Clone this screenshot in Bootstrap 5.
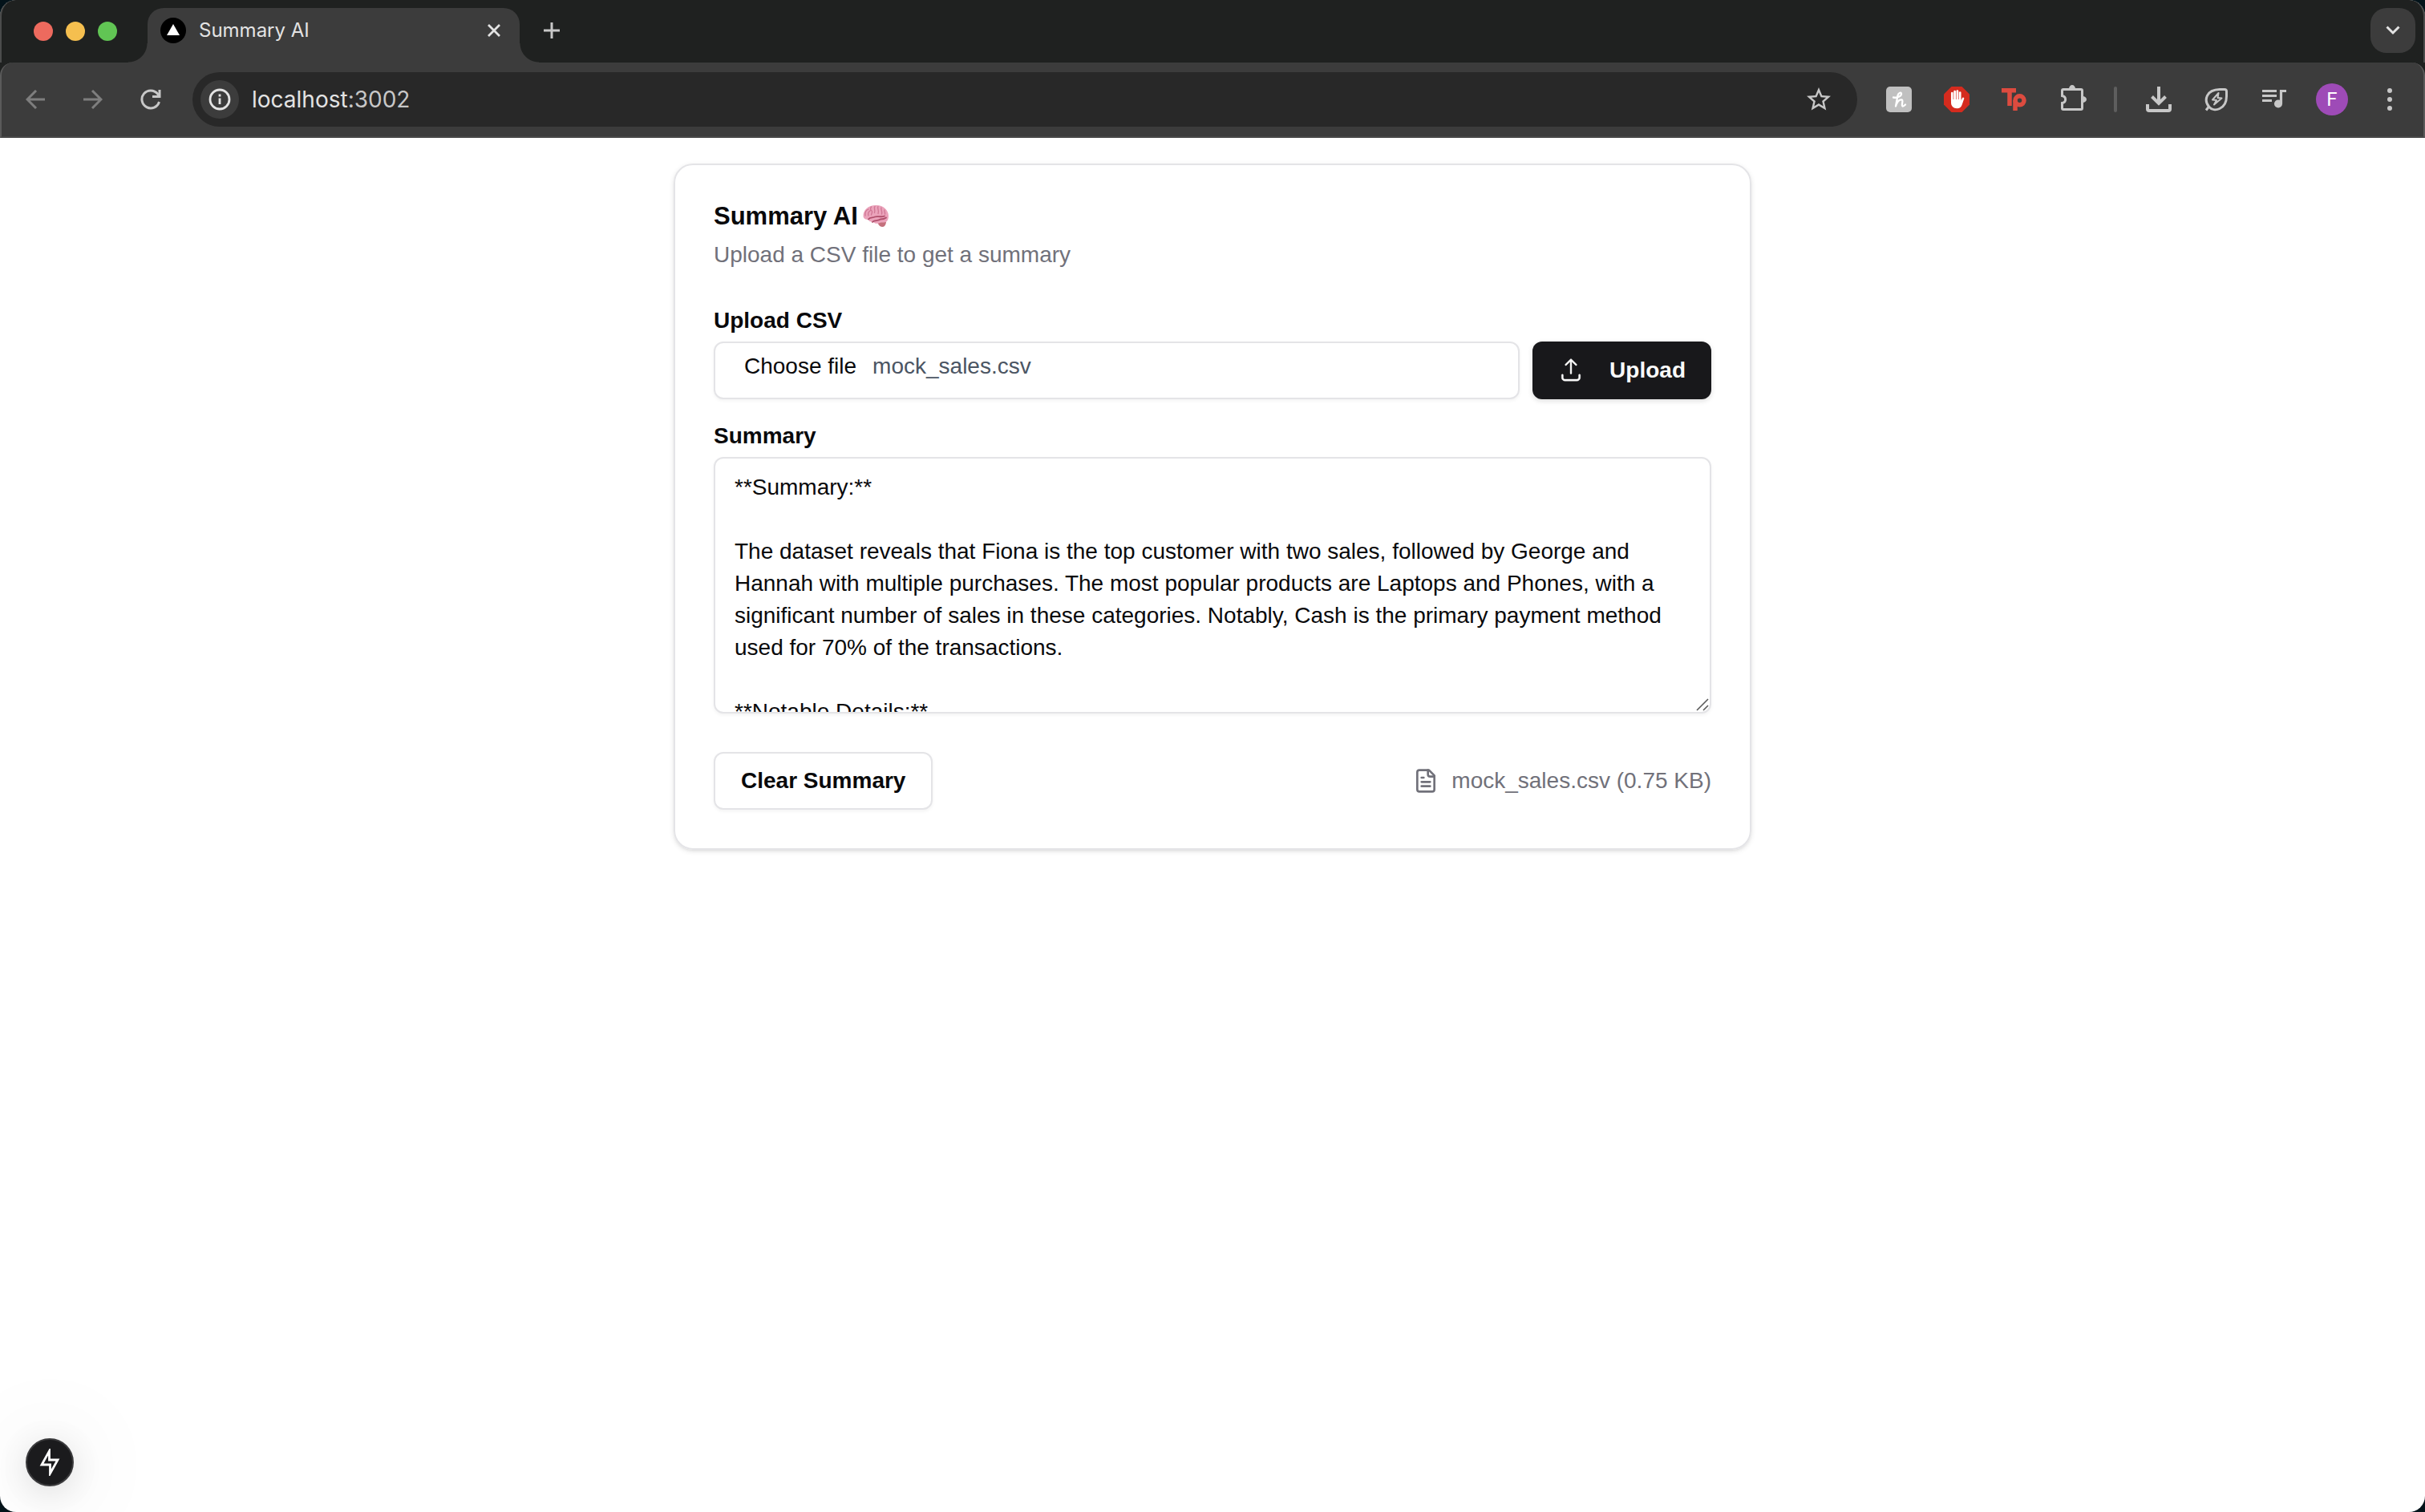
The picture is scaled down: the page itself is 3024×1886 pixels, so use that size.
<!DOCTYPE html>
<html lang="en">
<head>
<meta charset="utf-8">
<meta name="viewport" content="width=device-width, initial-scale=1">
<title>Summary AI</title>
<link rel="stylesheet" href="https://cdn.jsdelivr.net/npm/bootstrap@5.3.0/dist/css/bootstrap.min.css">
<style>
  html { background: #03131a; }
  body { min-height: 100vh; font-family: "Liberation Sans", Arial, sans-serif; font-size: 28px; line-height: 40px; color: #09090b; background: #03131a; }
  svg { display: block; flex: none; }
  .window-frame { min-height: 100vh; border-radius: 20px; background: #fff; overflow: hidden; position: relative; }

  .tab-strip { background: #1f2120; height: 78px; padding: 10px 10px 0 40px; border: 2px solid #4b4c4c; border-width: 0 2px; border-radius: 20px 20px 0 0; }
  .lights { gap: 16px; width: 142px; height: 58px; }
  .light { width: 24px; height: 24px; border-radius: 50%; }
  .light-close { background: #ed6a5e; }
  .light-min { background: #f5bf4f; }
  .light-max { background: #61c554; }
  .browser-tab { position: relative; width: 464px; height: 68px; padding: 0 20px 12px 16px; border-radius: 20px 20px 0 0; background: #3c3c3c; font: 24px/32px Inter, sans-serif; color: #e3e3e3; }
  .browser-tab::before, .browser-tab::after { content: ""; position: absolute; bottom: 0; width: 24px; height: 24px; }
  .browser-tab::before { right: 100%; background: radial-gradient(circle at 0 0, transparent 23px, #3c3c3c 24px); }
  .browser-tab::after { left: 100%; background: radial-gradient(circle at 100% 0, transparent 23px, #3c3c3c 24px); }
  .icon-btn { display: flex; align-items: center; justify-content: center; flex: none; width: 48px; height: 48px; padding: 0; border: 0; background: none; color: #c7c7c7; border-radius: 50%; }
  .tab-close { width: 24px; height: 32px; color: #e3e3e3; }
  .tab-new { margin: 4px 0 0 16px; }
  .tab-search { width: 56px; height: 56px; border-radius: 20px; background: #3c3c3c; color: #e3e3e3; }

  .toolbar-back { background: #1f2120; }
  .toolbar-row { height: 94px; padding: 0 18px; background: #3c3c3c; border: 2px solid #5a5a5a; border-top: 0; border-bottom-color: #484848; border-radius: 16px 16px 0 0; }
  .nav-group { gap: 24px; }
  .omnibox { height: 68px; margin: 0 28px; padding: 0 24px 0 10px; border-radius: 34px; background: #282828; }
  .site-info { background: #3c3c3c; color: #e3e3e3; }
  .address { font: 28px/40px Inter, sans-serif; color: #e3e3e3; }
  .address-port { color: #c7c7c7; }
  .ext-sep { width: 4px; height: 32px; margin: 0 4px; border-radius: 2px; background: #5e5e5e; }
  .avatar { width: 40px; height: 40px; border-radius: 50%; background: #9e4bb7; color: #fff; font: 24px/40px Roboto, sans-serif; }

  .summary-card { max-width: 1344px; margin: 32px auto; padding: 48px; border: 2px solid #e4e4e7; border-radius: 24px; box-shadow: 0 2px 6px rgba(0,0,0,.1), 0 2px 4px -2px rgba(0,0,0,.1); }
  .stack-12 { gap: 12px; }
  .card-heading { font-size: 31px; line-height: 32px; font-weight: 700; gap: 6px; }
  .muted-text { color: #71717a; }
  .field-label { font-weight: 700; line-height: 28px; }
  .field-box { border: 2px solid #e4e4e7; border-radius: 12px; background: #fff; box-shadow: 0 2px 4px rgba(0,0,0,.05); color: #09090b; }
  .file-field { height: 72px; padding: 8px 36px; line-height: 42px; gap: 20px; cursor: pointer; }
  .file-name { color: #4b5563; }
  .app-btn { height: 72px; padding: 0 32px; border-radius: 12px; font-size: 28px; line-height: 40px; font-weight: 700; }
  .app-btn-dark { gap: 32px; background: #18181b; color: #fafafa; border: 0; box-shadow: 0 2px 6px rgba(0,0,0,.14); }
  .summary-text { display: block; width: 100%; height: 320px; padding: 16px 24px; font: inherit; resize: none; overflow: hidden; }
  .grip { position: absolute; right: 3px; bottom: 3px; }
  .dev-button { position: absolute; left: 32px; bottom: 32px; width: 60px; height: 60px; border: 2px solid #3b3b3d; border-radius: 50%; background: #1b1b1d; color: #fff; box-shadow: 0 8px 40px rgba(0,0,0,.12), 0 4px 120px rgba(0,0,0,.14); }
</style>
</head>
<body>
<div class="window-frame">
  <header>
    <div class="toolbar-back">
      <div class="tab-strip d-flex align-items-start">
        <div class="lights d-flex align-items-center">
          <span class="light light-close"></span>
          <span class="light light-min"></span>
          <span class="light light-max"></span>
        </div>
        <div class="browser-tab d-flex align-items-center">
          <svg width="32" height="32" viewBox="0 0 32 32"><circle cx="16" cy="16" r="16"/><path d="M16 8l8 14H8z" fill="#fff"/></svg>
          <span class="flex-grow-1 ms-3">Summary AI</span>
          <button class="icon-btn tab-close" aria-label="Close tab"><svg width="16" height="16" viewBox="0 0 16 16" stroke="currentColor" stroke-width="2.8"><path d="M1 1l14 14M15 1L1 15"/></svg></button>
        </div>
        <button class="icon-btn tab-new" aria-label="New tab"><svg width="20" height="20" viewBox="0 0 20 20" stroke="currentColor" stroke-width="3"><path d="M10 0v20M0 10h20"/></svg></button>
        <button class="icon-btn tab-search ms-auto" aria-label="Search tabs"><svg width="18" height="12" viewBox="0 0 18 12" fill="none" stroke="currentColor" stroke-width="3"><path d="M1.500 1.500L9 9l7.500-7.500"/></svg></button>
      </div>
      <div class="toolbar-row d-flex align-items-center">
        <div class="nav-group d-flex">
          <button class="icon-btn" aria-label="Back"><svg width="24" height="24" viewBox="0 0 24 24" fill="none" stroke="#7e7e7e" stroke-width="3"><path d="M24 12H2M13 1L2 12l11 11"/></svg></button>
          <button class="icon-btn" aria-label="Forward"><svg width="24" height="24" viewBox="0 0 24 24" fill="none" stroke="#7e7e7e" stroke-width="3"><path d="M0 12h22M11 1l11 11-11 11"/></svg></button>
          <button class="icon-btn" aria-label="Reload"><svg width="26" height="26" viewBox="0 0 26 26" fill="none" stroke="currentColor" stroke-width="3"><path d="M23.500 16A11 11 0 1 1 21.500 6L24 9"/><path d="M24 1v8.500h-9"/></svg></button>
        </div>
        <div class="omnibox d-flex align-items-center flex-grow-1">
          <button class="icon-btn site-info" aria-label="Site information"><svg width="28" height="28" viewBox="0 0 28 28" fill="none" stroke="currentColor" stroke-width="2.800"><circle cx="14" cy="14" r="12"/><path d="M14 12.500V20M14 7.500v3"/></svg></button>
          <span class="address flex-grow-1 ms-3">localhost<span class="address-port">:3002</span></span>
          <button class="icon-btn" aria-label="Bookmark this tab"><svg width="36" height="36" viewBox="0 0 24 24" fill="currentColor"><path d="M22 9.240l-7.190-.620L12 2 9.190 8.630 2 9.240l5.460 4.730L5.820 21 12 17.270 18.180 21l-1.630-7.030L22 9.240zM12 15.400l-3.760 2.270 1-4.280-3.320-2.880 4.380-.380L12 6.100l1.710 4.040 4.380.380-3.320 2.880 1 4.280L12 15.400z"/></svg></button>
        </div>
        <div class="nav-group d-flex align-items-center">
          <button class="icon-btn" aria-label="Honey"><svg width="32" height="32" viewBox="0 0 32 32"><rect width="32" height="32" rx="5" fill="#c0c0c0"/><path d="M9 13.500c5 1 10-1.500 10-4.500 0-2.500-3.500-1.500-4.500 2L12 24.500c2-6 5-8.500 7.500-8 2.500.500-1 7 1 8 1 .500 2-.500 3.500-2" fill="none" stroke="#fff" stroke-width="2.300" stroke-linecap="round" stroke-linejoin="round"/></svg></button>
          <button class="icon-btn" aria-label="AdBlock"><svg width="32" height="32" viewBox="0 0 32 32"><path d="M9.500 0h13L32 9.500v13L22.500 32h-13L0 22.500v-13z" fill="#d52b1e"/><path d="M10.300 8v10M13.600 6v11M16.900 5.500v11M20.200 7.500v12" stroke="#fff" stroke-width="2.700" stroke-linecap="round"/><path d="M9 16h12.500v2l1.300-3.500c.700-1.700 3-.900 2.400.8L22.500 23c-1.200 3-3 4.200-6 4.200-4.700 0-7.500-3-7.500-7.200z" fill="#fff"/></svg></button>
          <button class="icon-btn" aria-label="Toucan"><svg width="32" height="32" viewBox="0 0 32 32" fill="none" stroke="#dd4b3f"><path d="M0 4.700h18M10 3v21" stroke-width="5.500"/><path d="M17 30V17" stroke-width="5.500"/><circle cx="22.500" cy="17.300" r="5.500" stroke-width="5.500"/></svg></button>
          <button class="icon-btn" aria-label="Extensions"><svg width="36" height="36" viewBox="0 0 36 36" fill="none" stroke="currentColor" stroke-width="3"><path d="M7 5.500h22q1.500 0 1.500 1.500v22q0 1.500-1.500 1.500H7q-1.500 0-1.500-1.500v-6.500c5.500-1 5.500-8 0-9V7q0-1.500 1.500-1.500z"/><path d="M14 5a4 5 0 0 1 8 0zM31 14a5 4 0 0 1 0 8z" fill="currentColor" stroke="none"/></svg></button>
          <span class="ext-sep"></span>
          <button class="icon-btn" aria-label="Downloads"><svg width="32" height="32" viewBox="0 0 32 32" fill="none" stroke="currentColor" stroke-width="4"><path d="M16 0v21M7.500 12.500l8.500 8.500 8.500-8.500M2 22v6q0 2 2 2h24q2 0 2-2v-6"/></svg></button>
          <button class="icon-btn" aria-label="Energy saver"><svg width="32" height="32" viewBox="0 0 32 32" fill="none" stroke="currentColor" stroke-width="3"><path d="M6.500 25C0 17 3 4 20 3.600h6q2.500 0 2.500 2.500V12C28.500 28 13 33 6.500 25L3 29.500"/><path d="M18.500 8L11 16.500l5 .5-3 5.500 9.500-8-5-.5z" stroke-width="2" stroke-linejoin="round"/></svg></button>
          <button class="icon-btn" aria-label="Media controls"><svg width="32" height="32" viewBox="0 0 32 32" fill="none" stroke="currentColor" stroke-width="3.200"><path d="M1 5.500h18M1 11.500h18M1 17.500h12M31 5.500h-6.500v16"/><circle cx="21" cy="21.500" r="5" fill="currentColor" stroke="none"/></svg></button>
          <button class="icon-btn" aria-label="Profile"><span class="avatar">F</span></button>
          <button class="icon-btn" aria-label="Menu"><svg width="6" height="28" viewBox="0 0 6 28" fill="currentColor"><circle cx="3" cy="3" r="3"/><circle cx="3" cy="14" r="3"/><circle cx="3" cy="25" r="3"/></svg></button>
        </div>
      </div>
    </div>
  </header>

  <main class="summary-card">
    <div class="d-flex flex-column stack-12 mb-5">
      <h1 class="card-heading d-flex align-items-center m-0">Summary AI
        <svg width="32" height="32" viewBox="0 0 32 32" role="img" aria-label="Brain">
          <path d="M18 23l6-3 5 3c-.5 4-2 6-5 6-2.500 0-5-3-6-6z" fill="#c4707c"/>
          <path d="M.5 16C0 8 7 2 16 2c9-.5 16 6 16 13 0 5-2 8.500-6 8.500-3 0-4-.5-5 .5-3 1.500-6 1-8-1-2 0-5 0-6-3-3 0-6-1-6.500-4z" fill="#eba3bb"/>
          <path d="M7 19.500c2-3 5-1.500 8-3s7 1 12-1M12 23c2-3 7-1 10-3.500 3 0 5-.5 7-2" fill="none" stroke="#b0506c" stroke-width="1.800" stroke-linecap="round"/>
          <path d="M3 15c-.5-4 1-7 4-8M7 15c-1-3 0-5 2.500-6.500M10.500 4c-1.500 2-1 4 .5 5s0 3-.5 5M15 3.500c-2 2 1 4-.5 8M19 3.500c-1.500 2.500 1.500 4 0 9M23 5c-1 2.500 1.500 4 .5 8M27 8c-.5 2 1 3 .5 5" fill="none" stroke="#cf7794" stroke-width="1.300" stroke-linecap="round"/>
        </svg>
      </h1>
      <p class="muted-text m-0">Upload a CSV file to get a summary</p>
    </div>
    <form class="d-flex flex-column">
      <div class="d-flex flex-column stack-12">
        <label class="field-label" for="csv-file">Upload CSV</label>
        <div class="d-flex gap-3">
          <input class="visually-hidden" type="file" id="csv-file" accept=".csv">
          <label class="field-box file-field d-flex flex-grow-1" for="csv-file"><span>Choose file</span><span class="file-name">mock_sales.csv</span></label>
          <button type="button" class="btn app-btn app-btn-dark d-flex align-items-center">
            <svg width="32" height="32" viewBox="0 0 15 15" fill="currentColor" stroke="currentColor" stroke-width=".2"><path fill-rule="evenodd" clip-rule="evenodd" d="M7.818 1.182a.45.45 0 0 0-.636 0l-3 3a.45.45 0 1 0 .636.636L7.050 2.586V9.500a.45.45 0 0 0 .9 0V2.586l2.232 2.232a.45.45 0 1 0 .636-.636l-3-3zM2.500 10a.5.5 0 0 1 .5.5V12c0 .554.446 1 .996 1h7.005A.999.999 0 0 0 12 12v-1.500a.5.5 0 1 1 1 0V12c0 1.104-.894 2-1.999 2H3.996A1.997 1.997 0 0 1 2 12v-1.500a.5.5 0 0 1 .5-.5z" transform="translate(0 -.3)"/></svg>
            Upload
          </button>
        </div>
      </div>
      <div class="d-flex flex-column stack-12 mt-4 pt-2">
        <label class="field-label" for="summary">Summary</label>
        <div class="position-relative">
          <textarea class="field-box summary-text" id="summary">**Summary:**

The dataset reveals that Fiona is the top customer with two sales, followed by George and Hannah with multiple purchases. The most popular products are Laptops and Phones, with a significant number of sales in these categories. Notably, Cash is the primary payment method used for 70% of the transactions.

**Notable Details:**</textarea>
          <svg class="grip" width="16" height="16" viewBox="0 0 16 16" stroke="#5b5b5b" stroke-width="1.600"><path d="M1 15L15 1M9 15l6-6"/></svg>
        </div>
      </div>
      <div class="d-flex align-items-center justify-content-between mt-5">
        <button type="button" class="btn field-box app-btn">Clear Summary</button>
        <div class="muted-text d-flex align-items-center gap-3">
          <svg width="32" height="32" viewBox="0 0 24 24" fill="none" stroke="currentColor" stroke-width="2" stroke-linecap="round" stroke-linejoin="round"><path d="M15 2H6a2 2 0 0 0-2 2v16a2 2 0 0 0 2 2h12a2 2 0 0 0 2-2V7z"/><path d="M14 2v4a2 2 0 0 0 2 2h4M10 9H8M16 13H8M16 17H8"/></svg>
          mock_sales.csv (0.75 KB)
        </div>
      </div>
    </form>
  </main>

  <button class="dev-button d-flex align-items-center justify-content-center p-0" aria-label="Static route"><svg width="26" height="34" viewBox="0 0 26 34" fill="none" stroke="currentColor" stroke-width="2.800"><path d="M12.500 3v11H23L13.500 31V20H3z"/></svg></button>
</div>
<script src="https://cdn.jsdelivr.net/npm/bootstrap@5.3.0/dist/js/bootstrap.bundle.min.js"></script>
</body>
</html>
